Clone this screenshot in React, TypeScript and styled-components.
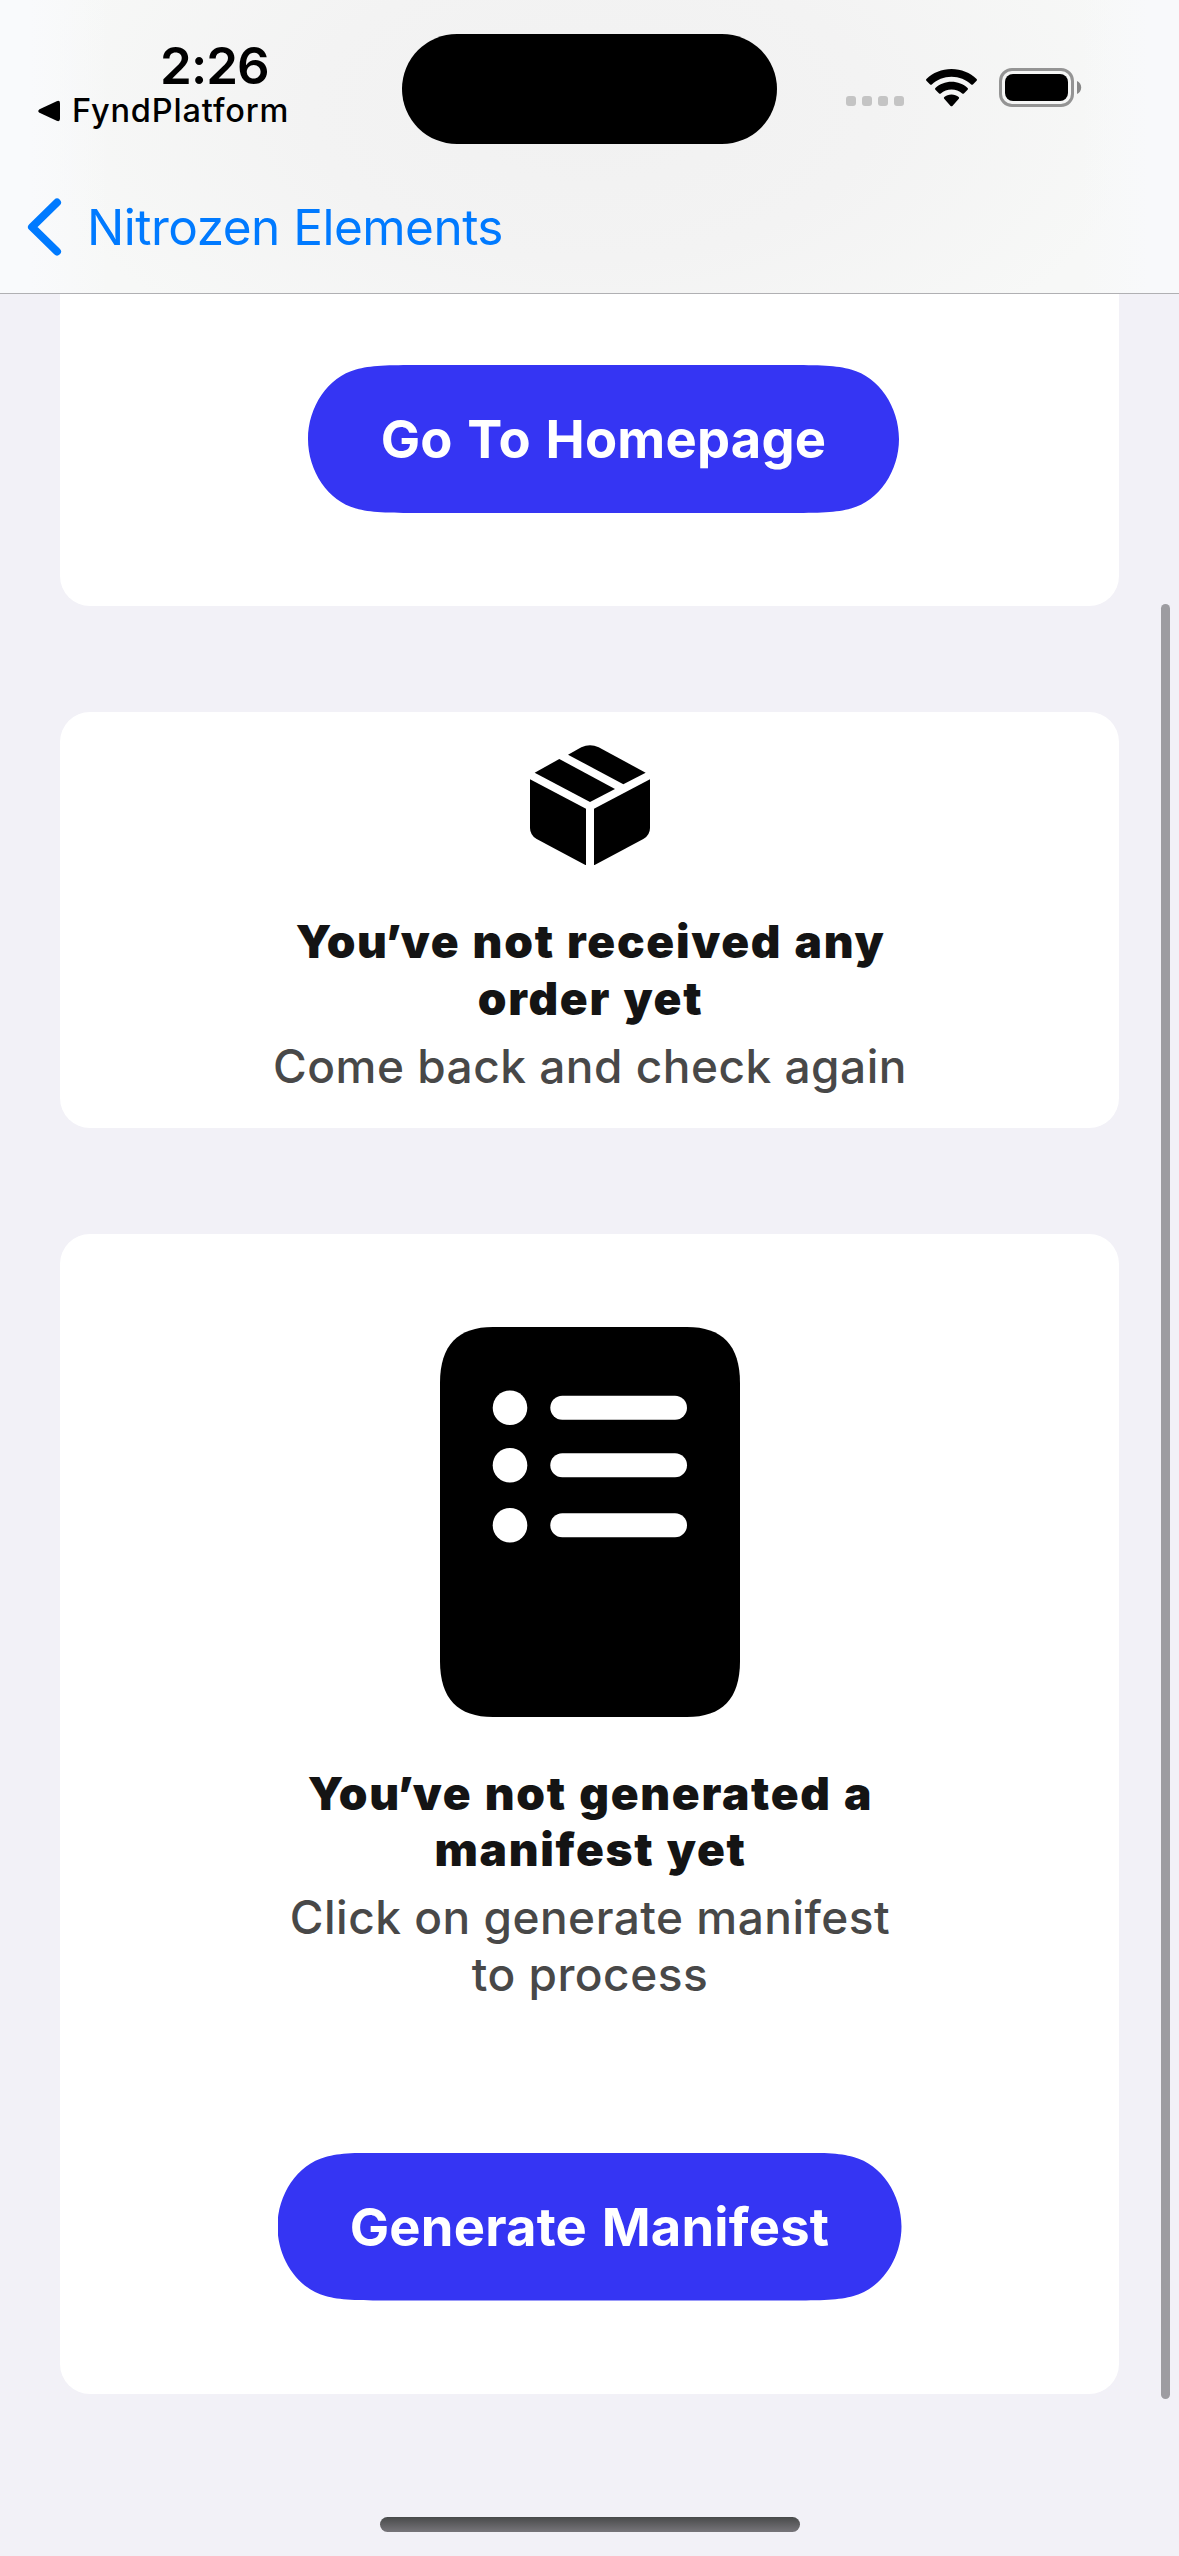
import React from "react";
import styled, { createGlobalStyle } from "styled-components";

const GlobalStyle = createGlobalStyle`
  * { box-sizing: border-box; }
  body { margin: 0; background: #f2f1f7; }
`;

const Screen = styled.div`
  position: relative;
  width: 1179px;
  height: 2556px;
  overflow: hidden;
  display: flex;
  flex-direction: column;
  background: #f2f1f7;
  font-family: Inter, "Liberation Sans", sans-serif;
`;

const Header = styled.header`
  height: 294px;
  flex: none;
  border-bottom: 1px solid #b0b0b3;
  background:
    linear-gradient(90deg, #f9fafc 0, #f9fafc 30px, rgba(249, 250, 251, 0) 110px, rgba(249, 250, 251, 0) 1080px, #f8f9fb 1150px),
    radial-gradient(ellipse 560px 300px at 590px 110px, #f1f1f1 0%, #f3f3f3 50%, #f7f8f7 100%);
`;

const StatusBar = styled.div`
  height: 176px;
  display: grid;
  grid-template-columns: 402px 375px 402px;
`;

const ClockArea = styled.div`
  padding: 35px 0 0 38px;
`;

const Clock = styled.div`
  height: 61px;
  padding-left: 122px;
  font-size: 51px;
  line-height: 61px;
  font-weight: 600;
  letter-spacing: -0.9px;
`;

const BackToApp = styled.div`
  display: flex;
  align-items: center;
  gap: 12px;
  height: 30px;
  font-size: 32.5px;
  line-height: 30px;
  font-weight: 500;
  letter-spacing: 0.85px;
`;

const Island = styled.div`
  height: 110px;
  margin-top: 34px;
  border-radius: 55px;
  background: #000;
`;

const Indicators = styled.div`
  display: flex;
  align-items: flex-end;
  height: 107px;
  padding-left: 69px;
`;

const SignalDots = styled.div`
  display: flex;
  gap: 6px;
  margin: 0 22px 1px 0;
`;

const Dot = styled.i`
  width: 10px;
  height: 10px;
  border-radius: 3px;
  background: #c4c4c4;
`;

const BatterySlot = styled.span`
  display: flex;
  margin-left: 22px;
`;

const NavBack = styled.div`
  display: flex;
  align-items: center;
  height: 102px;
  padding-left: 24px;
  color: #007aff;
`;

const NavTitle = styled.span`
  margin-left: 22px;
  font-size: 49.5px;
  line-height: 60px;
  letter-spacing: -0.52px;
`;

const Content = styled.main`
  display: flex;
  flex-direction: column;
  gap: 106px;
  padding: 0 60px;
`;

const Card = styled.section<{ $pad: number; $clipped?: boolean }>`
  display: flex;
  flex-direction: column;
  align-items: center;
  padding: ${(p) => (p.$clipped ? 71 : p.$pad)}px 0 ${(p) => p.$pad}px;
  border-radius: ${(p) => (p.$clipped ? "0 0 30px 30px" : "30px")};
  background: #fff;
`;

const Heading = styled.h2`
  margin: 48px 0 0;
  padding-left: 2px;
  font-size: 46px;
  line-height: 56.5px;
  font-weight: 900;
  letter-spacing: 1.7px;
  word-spacing: 1.5px;
  text-align: center;
  color: #141414;
`;

const Apostrophe = styled.span`
  margin: 0 -2.5px 0 -3.5px;
`;

const Description = styled.p`
  margin: 11.5px 0 0;
  padding-left: 1px;
  font-size: 46px;
  line-height: 57px;
  font-weight: 500;
  letter-spacing: 0.5px;
  text-align: center;
  color: #484848;
`;

/* Continuous-corner pill: the curve eases into the long edges. */
const pillOutline = (w: number) =>
  `M0 74C0 42 20 12 48 4.5C62 .5 80 0 112 0H${w - 112}C${w - 80} 0 ${w - 62} .5 ${w - 48} 4.5` +
  `C${w - 20} 12 ${w} 42 ${w} 74C${w} 106 ${w - 20} 136 ${w - 48} 143.5` +
  `C${w - 62} 147.5 ${w - 80} 148 ${w - 112} 148H112C80 148 62 147.5 48 143.5C20 136 0 106 0 74Z`;

const PillButton = styled.button<{ $width: number; $top?: number; $shift?: number }>`
  width: ${(p) => p.$width}px;
  height: 148px;
  margin: ${(p) => p.$top ?? 0}px 0 0 ${(p) => p.$shift ?? 0}px;
  padding: 0;
  border: 0;
  clip-path: path("${(p) => pillOutline(p.$width)}");
  background: #3535f3;
  color: #fff;
  font: 700 52.5px/64px Inter, "Liberation Sans", sans-serif;
  letter-spacing: 0.2px;
  word-spacing: 2px;
`;

const ScrollThumb = styled.div`
  position: absolute;
  left: 1161px;
  top: 604px;
  width: 9px;
  height: 1795px;
  border-radius: 5px;
  background: #9d9ca1;
`;

const HomeIndicator = styled.div`
  position: absolute;
  left: 380px;
  top: 2517px;
  width: 420px;
  height: 15px;
  border-radius: 8px;
  background: linear-gradient(#484a4a, #77757a);
`;

const WifiIcon = () => (
  <svg width="51" height="38" viewBox="0 0 51 38">
    <path d="M25.5 0C35.3 0 44.2 3.8 50.6 10c.5.5.5 1.2 0 1.7l-3.7 3.7c-.5.5-1.2.5-1.7 0C40.1 10.6 33.1 7.7 25.5 7.7S10.9 10.6 5.800 15.400c-.5.5-1.2.5-1.7 0L.4 11.700c-.5-.5-.5-1.2 0-1.700C6.800 3.800 15.700 0 25.500 0Z" />
    <path d="M25.5 12.8c6.2 0 11.8 2.3 16.1 6.2.5.5.5 1.2 0 1.7l-3.700 3.700c-.5.5-1.2.5-1.7 0-2.9-2.5-6.6-4-10.7-4s-7.8 1.5-10.7 4c-.5.5-1.2.5-1.7 0l-3.700-3.700c-.5-.5-.5-1.2 0-1.700 4.300-3.900 9.900-6.200 16.100-6.200Z" />
    <path d="M25.5 25.5c2.8 0 5.3 1 7.2 2.6.5.5.6 1.2.1 1.7L26.400 36.900c-.5.5-1.300.5-1.800 0L18.200 29.800c-.5-.5-.4-1.200.1-1.700 1.900-1.600 4.400-2.600 7.200-2.600Z" />
  </svg>
);

const BatteryIcon = () => (
  <svg width="83" height="39" viewBox="0 0 83 39">
    <rect x="1.5" y="1.5" width="72" height="36" rx="11.5" fill="none" stroke="#949494" strokeWidth="3" />
    <rect x="6" y="6" width="63" height="27" rx="8" />
    <path d="M78 13c2.500 1 4.200 3.500 4.200 6.500S80.500 25 78 26Z" fill="#888" />
  </svg>
);

const BoxIcon = () => (
  <svg width="120" height="120" viewBox="0 0 360 360">
    <path d="M114 29 154 7Q180-6 206 7L347 83 280 118Z" />
    <path d="M88 42 255 132 180 171 14 83Z" />
    <path d="M0 103 168 191V361L20 282Q0 270 0 248Z" />
    <path d="M360 103 192 191V361L340 282Q360 270 360 248Z" />
  </svg>
);

const ManifestIcon = () => (
  <svg width="300" height="390" viewBox="0 0 300 390">
    <path d="M53 0H247C282 0 300 18 300 56V334C300 372 282 390 247 390H53C18 390 0 372 0 334V56C0 18 18 0 53 0Z" />
    {[80.8, 138.3, 198.3].map((y) => (
      <g key={y} fill="#fff">
        <circle cx="70" cy={y} r="17.3" />
        <rect x="110.3" y={y - 12} width="136.7" height="24" rx="12" />
      </g>
    ))}
  </svg>
);

export default function App() {
  return (
    <Screen>
      <GlobalStyle />
      <Header>
        <StatusBar>
          <ClockArea>
            <Clock>2:26</Clock>
            <BackToApp>
              <svg width="22" height="22" viewBox="0 0 22 22">
                <path d="M1.500 9.200 18.700 1.200Q22 0 22 3.200V18.800Q22 22 18.700 20.800L1.500 12.800Q-1 11 1.500 9.200Z" />
              </svg>
              FyndPlatform
            </BackToApp>
          </ClockArea>
          <Island />
          <Indicators>
            <SignalDots>
              <Dot />
              <Dot />
              <Dot />
              <Dot />
            </SignalDots>
            <WifiIcon />
            <BatterySlot>
              <BatteryIcon />
            </BatterySlot>
          </Indicators>
        </StatusBar>
        <NavBack>
          <svg width="41" height="60" viewBox="0 0 41 60" fill="none" stroke="currentColor" strokeWidth="8" strokeLinecap="round" strokeLinejoin="round">
            <path d="M33 5.500 8 30 33 54.500" />
          </svg>
          <NavTitle>Nitrozen Elements</NavTitle>
        </NavBack>
      </Header>
      <Content>
        <Card $pad={93} $clipped>
          <PillButton $width={591} $shift={28}>Go To Homepage</PillButton>
        </Card>
        <Card $pad={33}>
          <BoxIcon />
          <Heading>You<Apostrophe>’</Apostrophe>ve not received any<br />order yet</Heading>
          <Description>Come back and check again</Description>
        </Card>
        <Card $pad={93}>
          <ManifestIcon />
          <Heading>You<Apostrophe>’</Apostrophe>ve not generated a<br />manifest yet</Heading>
          <Description>Click on generate manifest<br />to process</Description>
          <PillButton $width={624} $top={149.5}>Generate Manifest</PillButton>
        </Card>
      </Content>
      <ScrollThumb />
      <HomeIndicator />
    </Screen>
  );
}
